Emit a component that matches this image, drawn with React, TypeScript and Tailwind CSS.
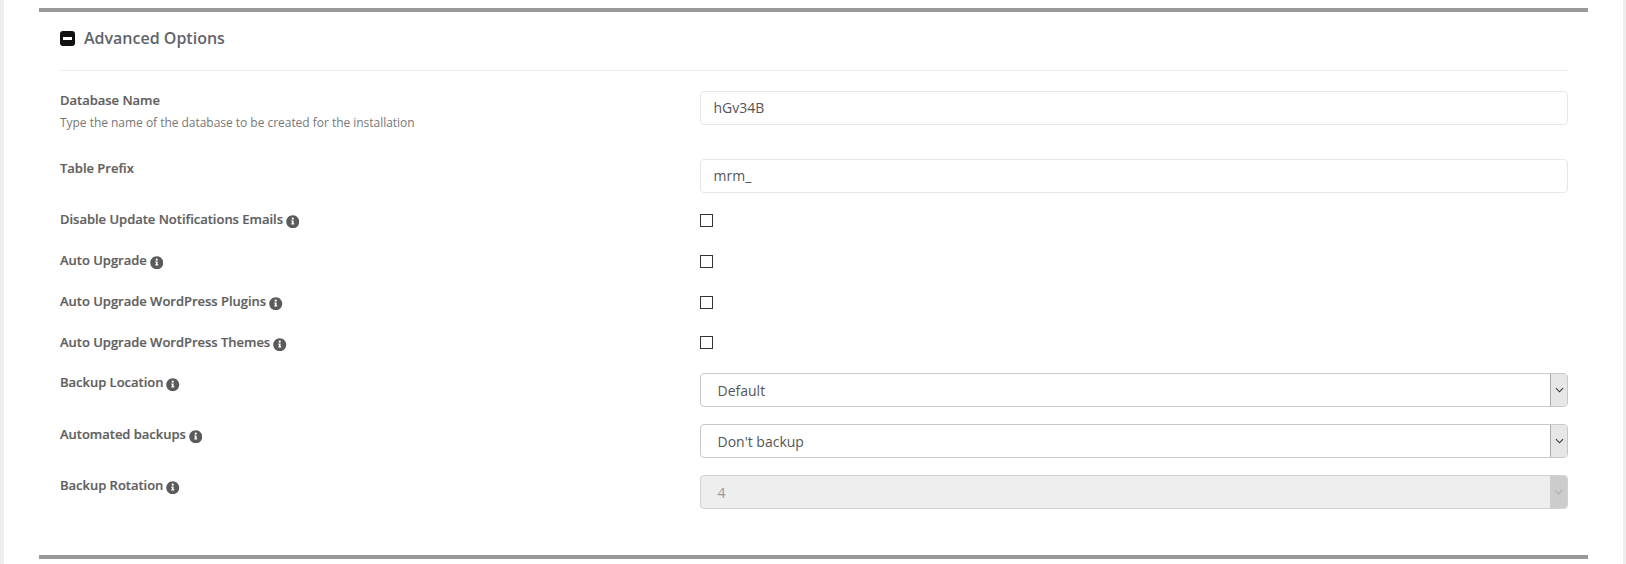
const InfoIcon = () => (
  <svg viewBox="0 0 512 512" className="inline-block w-[13.5px] h-[13.5px] ml-[3px] align-[-4px] fill-[#5b5b5b]">
    <path d="M256 8C119 8 8 119 8 256s111 248 248 248 248-111 248-248S393 8 256 8zm0 90a42 42 0 1 1 0 84 42 42 0 0 1 0-84zm56 254c0 7-5 12-12 12h-88c-7 0-12-5-12-12v-24c0-7 5-12 12-12h12v-64h-12c-7 0-12-5-12-12v-24c0-7 5-12 12-12h64c7 0 12 5 12 12v100h12c7 0 12 5 12 12z" />
  </svg>
);

const Chevron = ({ color }: { color: string }) => (
  <svg viewBox="0 0 10 6" className="w-[9px] h-[6px]" fill="none" stroke={color} strokeWidth="1.2">
    <path d="M1 1l4 4 4-4" />
  </svg>
);

const Label = ({ text, info }: { text: string; info?: boolean }) => (
  <div className="text-[13px] leading-[18px] font-semibold tracking-[-0.02px] text-[#5f5f5f] [-webkit-text-stroke:0.2px_#5f5f5f]">
    {text}
    {info && <InfoIcon />}
  </div>
);

const TextRow = ({ label, desc, value, h }: { label: string; desc?: string; value: string; h: string }) => (
  <div className={`flex ${h}`}>
    <div className="w-[641px] pl-[1px]">
      <Label text={label} />
      {desc && <p className="text-[12px] leading-[18px] mt-[5px] tracking-[-0.03px] text-[#777]">{desc}</p>}
    </div>
    <div className="flex-1 h-[34px] border border-[#e6e6e6] rounded-[4px] pl-[12.5px] pb-[2px] flex items-center text-[14px] text-[#555]">
      {value}
    </div>
  </div>
);

const CheckRow = ({ label, h, labelTop }: { label: string; h: string; labelTop: string }) => (
  <div className={`flex ${h}`}>
    <div className={`w-[641px] pl-[1px] ${labelTop}`}>
      <Label text={label} info />
    </div>
    <div className="w-[13px] h-[13px] border border-[#333] bg-white" />
  </div>
);

const SelectRow = ({ label, value, disabled, labelTop }: { label: string; value: string; disabled?: boolean; labelTop?: string }) => (
  <div className="flex h-[51px]">
    <div className={`w-[641px] pl-[1px] ${labelTop ?? ""}`}>
      <Label text={label} info />
    </div>
    <div
      className={
        disabled
          ? "flex-1 h-[34px] border border-[#d2d2d2] rounded-[4px] bg-[#eee] flex items-center text-[14px] text-[#999] overflow-hidden"
          : "flex-1 h-[34px] border border-[#c8c8c8] rounded-[4px] bg-white flex items-center text-[14px] text-[#555] overflow-hidden"
      }
    >
      <span className="flex-1 pl-[16.5px]">{value}</span>
      <div
        className={
          disabled
            ? "w-[17px] h-full bg-[#ccc] flex items-center justify-center"
            : "w-[17px] h-full bg-[#e6e6e6] border-l border-[#aaa] flex items-center justify-center"
        }
      >
        <Chevron color={disabled ? "#aaa" : "#333"} />
      </div>
    </div>
  </div>
);

export default function App() {
  return (
    <div className="bg-[#eeeeee] pl-[4px] pr-[3px] h-[564px] overflow-hidden font-['Open_Sans',sans-serif]">
      <div className="bg-white h-full px-[35px] pt-[8px]">
        <div className="border-t-4 border-[#999] border-b-4 h-[551px] px-[20px]">
          <div className="h-[59px] border-b border-[#eeeeee] flex items-center pb-[6px]">
            <div className="w-[15px] h-[15px] rounded-[3px] bg-[#111] flex items-center justify-center ml-[1px]">
              <div className="w-[9px] h-[3px] bg-white" />
            </div>
            <h2 className="ml-[9px] text-[16px] font-semibold text-[#5f646b]">Advanced Options</h2>
          </div>
          <div className="pt-[20px]">
            <TextRow label="Database Name" desc="Type the name of the database to be created for the installation" value="hGv34B" h="h-[68px]" />
            <TextRow label="Table Prefix" value="mrm_" h="h-[55px]" />
            <CheckRow label="Disable Update Notifications Emails" h="h-[41px]" labelTop="-mt-[4px]" />
            <CheckRow label="Auto Upgrade" h="h-[41px]" labelTop="-mt-[4px]" />
            <CheckRow label="Auto Upgrade WordPress Plugins" h="h-[40px]" labelTop="-mt-[4px]" />
            <CheckRow label="Auto Upgrade WordPress Themes" h="h-[37px]" labelTop="-mt-[3px]" />
            <SelectRow label="Backup Location" value="Default" />
            <SelectRow label="Automated backups" value="Don't backup" labelTop="pt-[1px]" />
            <SelectRow label="Backup Rotation" value="4" disabled labelTop="pt-[1px]" />
          </div>
        </div>
      </div>
    </div>
  );
}
